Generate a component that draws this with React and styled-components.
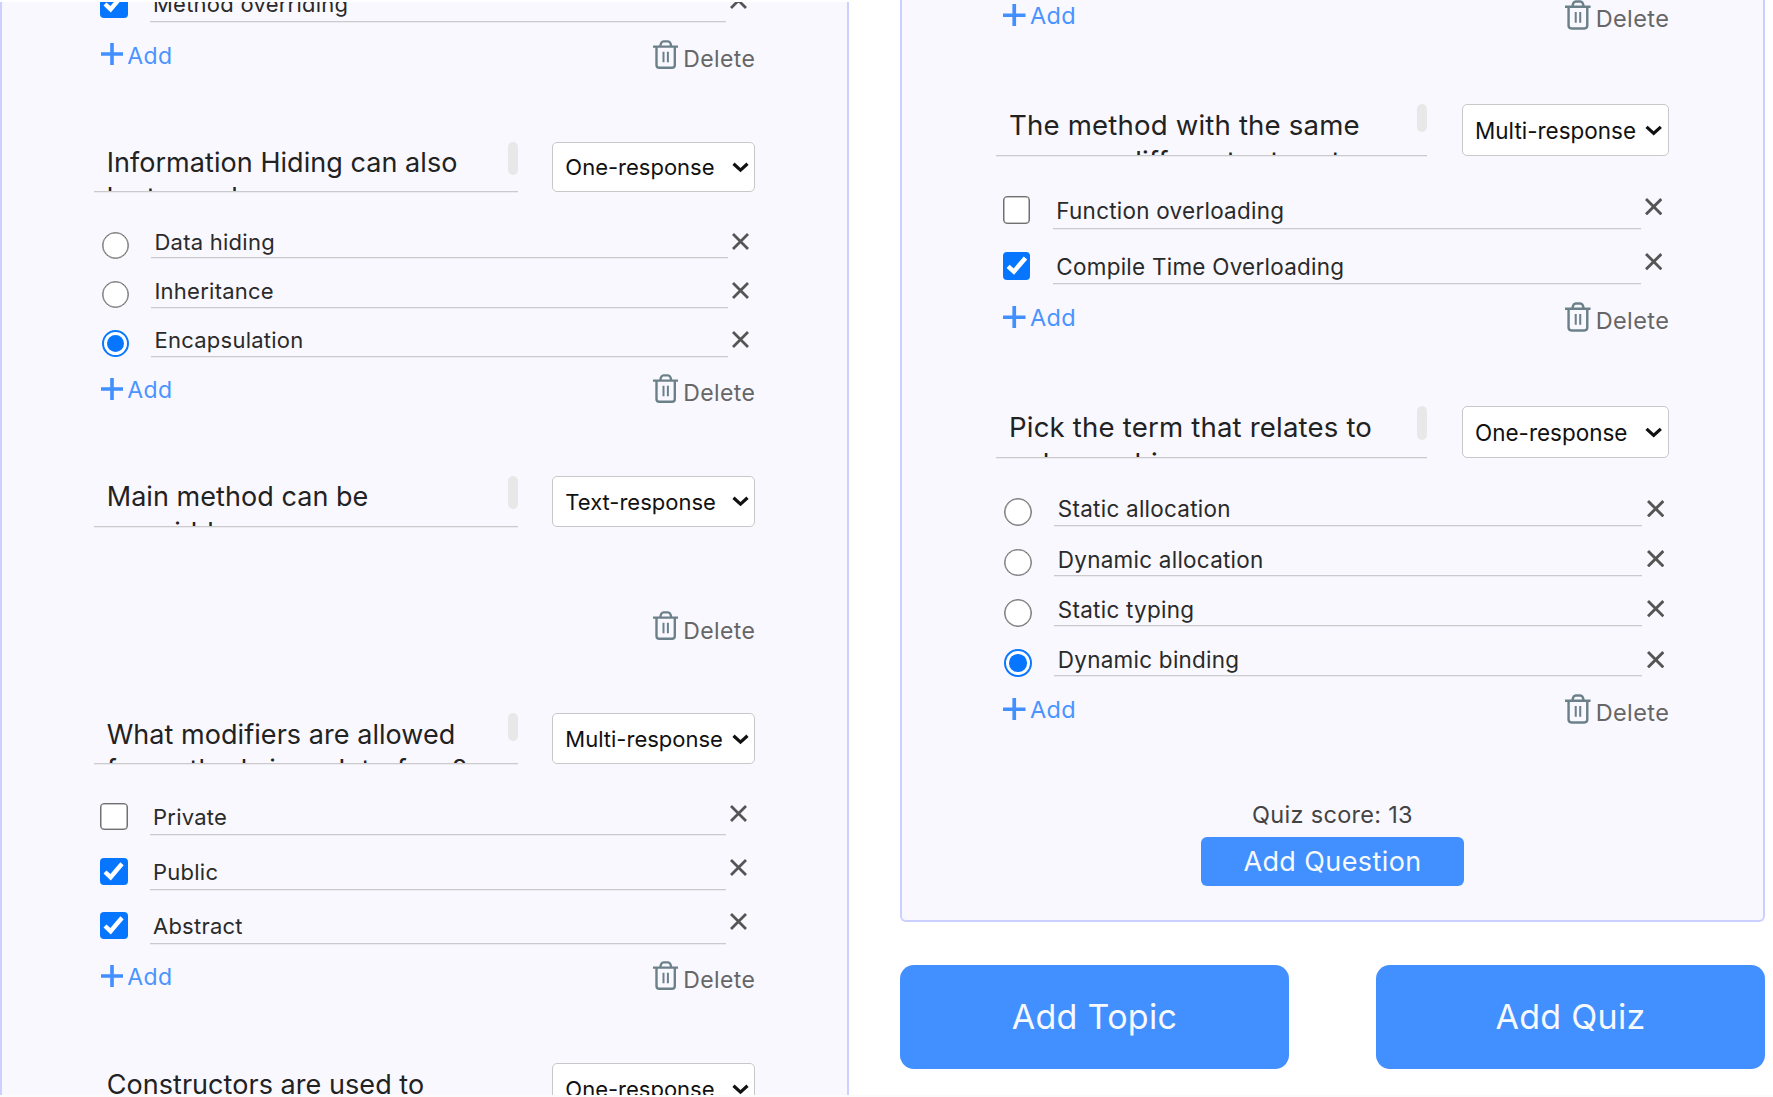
import React from "react";
import styled, { createGlobalStyle, css, ThemeProvider } from "styled-components";

const GlobalStyle = createGlobalStyle`
  *, *::before, *::after { box-sizing: border-box; }
  html, body { margin: 0; padding: 0; background: #fff; overflow: hidden; }
  body { font-family: Inter, "Liberation Sans", sans-serif; }
`;

/* Both columns share one set of measures; the theme scales them. */
const u = (n) => (p) => `${(n * p.theme.scale).toFixed(3)}px`;

const Page = styled.main`
  display: flex;
  gap: 51px;
  width: 1773px;
  height: 1097px;
  border-bottom: 2px solid #fbfbfb;
  background: #fff;
`;

const LeftColumn = styled.section`
  width: 849px;
  height: 1095px;
  padding-top: 2px;
  overflow: hidden;
`;

const RightColumn = styled.section`
  width: 865px;
  height: 1095px;
  overflow: hidden;
`;

const Panel = styled.div`
  display: flex;
  flex-direction: column;
  height: ${(p) => p.$height}px;
  padding: 0 ${u(91.7)};
  border: 2px solid #ccd0ff;
  border-width: ${(p) => (p.$closed ? "0 2px 2px" : "0 2px")};
  border-radius: ${(p) => (p.$closed ? "0 0 6px 6px" : "0")};
  background: #f9f8ff;
  overflow: hidden;
`;

const Scrolled = styled.div`
  display: flex;
  flex-direction: column;
  flex: none;
  margin-top: -${(p) => p.$by}px;
`;

const Question = styled.article`
  display: flex;
  flex-direction: column;
  flex: none;
  margin-bottom: ${u(69.3)};
`;

const Header = styled.header`
  display: flex;
  justify-content: space-between;
  height: ${u(50.5)};
  margin-bottom: ${u(17)};
`;

const underline = css`
  border-bottom: 1px solid #cbcbce;
  box-shadow: 0 1px 0 #ebebf0;
`;

const Prompt = styled.div`
  display: flex;
  justify-content: space-between;
  width: 64.1%;
  height: 100%;
  padding-left: ${u(13)};
  ${underline}
  overflow: hidden;
`;

const PromptText = styled.p`
  margin: ${u(3.4)} 0 0;
  font-size: ${u(27)};
  line-height: ${u(35.2)};
  letter-spacing: ${(p) => p.theme.tracking}px;
  color: #222;
  white-space: pre;
`;

const Thumb = styled.span`
  flex: none;
  width: ${u(10)};
  height: ${(p) => u(p.$size)(p)};
  border-radius: ${u(5)};
  background: #e8e8e8;
`;

const Select = styled.button`
  display: flex;
  align-items: center;
  justify-content: space-between;
  width: ${u(203)};
  height: 100%;
  padding: ${u(1.2)} ${u(5.5)} 0 ${u(12)};
  border: 1px solid #c8c8c8;
  border-radius: ${u(5)};
  background: #fff;
  color: #111;
  font: 400 ${u(22)} Inter, sans-serif;
  white-space: nowrap;
`;

const Options = styled.ul`
  display: flex;
  flex-direction: column;
  margin: 0;
  padding: 0;
  min-height: ${u(50.6)};
  list-style: none;
`;

const Option = styled.li`
  display: flex;
  height: ${(p) => u(p.$round ? 49.2 : 54.35)(p)};
  padding-left: ${(p) => u(p.$round ? 8.2 : 6.7)(p)};
`;

const Mark = styled.span`
  display: flex;
  align-items: center;
  justify-content: center;
  flex: none;
  width: ${u(27.2)};
  height: ${u(27.2)};
  margin-top: ${u(22.4)};
  border: 1px solid #707070;
  box-shadow: inset 0 0 0 0.6px #8a8a8a;
  border-radius: ${(p) => (p.$round ? "50%" : "4px")};
  background: #fff;
  ${(p) => p.$on && p.$round && css`
    border-color: #0a78ff;
    border-width: 2px;
    box-shadow: none;
    &::after {
      content: "";
      width: ${u(17)};
      height: ${u(17)};
      border-radius: 50%;
      background: #0675ff;
    }
  `}
  ${(p) => p.$on && !p.$round && css`
    border: 0;
    box-shadow: none;
    background: #0675ff;
  `}
`;

const Answer = styled.span`
  display: flex;
  flex: 1;
  align-items: flex-end;
  height: 100%;
  margin-left: ${u(22)};
  padding: 0 0 ${(p) => u(p.$round ? 1.6 : 3)(p)} ${u(3.4)};
  ${underline}
  font-size: ${u(22)};
  line-height: ${u(27)};
  letter-spacing: 0.25px;
  color: #2a2a2a;
`;

const Remove = styled.span`
  display: flex;
  width: ${(p) => u((p.$round ? 27.6 : 29.3) - p.theme.edge)(p)};
  padding: ${u(23.8)} 0 0 ${u(4.2)};
`;

const Footer = styled.footer`
  display: flex;
  height: ${u(50)};
`;

const AddLink = styled.a`
  display: flex;
  align-items: flex-start;
  padding: ${u(20.8)} 0 0 ${u(7.2)};
  font-size: ${u(23)};
  line-height: ${u(28)};
  letter-spacing: 0.4px;
  color: #4a94ff;
  span { margin: ${u(-1.5)} 0 0 ${u(4.3)}; }
`;

const DeleteLink = styled(AddLink)`
  margin-left: auto;
  padding: ${u(17.4)} 0 0;
  color: #666;
  span { margin: ${u(5.1)} 0 0 ${u(4.8)}; }
`;

const Summary = styled.div`
  display: flex;
  flex-direction: column;
  align-items: center;
  margin-top: 2.4px;
`;

const Score = styled.p`
  margin: 0 0 8.4px;
  font-size: 23.5px;
  line-height: 28px;
  letter-spacing: 0.3px;
  color: #444;
`;

const AddQuestion = styled.button`
  width: 263px;
  height: 49px;
  padding: 0;
  border: 0;
  border-radius: 6px;
  background: #428fff;
  color: #f6faff;
  font: 400 27px Inter, sans-serif;
  letter-spacing: 0.4px;
`;

const Actions = styled.div`
  display: flex;
  justify-content: space-between;
  margin-top: 43px;
`;

const BigButton = styled.button`
  width: 389px;
  height: 104px;
  padding: 0 0 2px;
  border: 0;
  border-radius: 14px;
  background: #428fff;
  color: #f6faff;
  font: 400 34px Inter, sans-serif;
  letter-spacing: 0.3px;
`;

const Icon = styled.svg`
  display: block;
  flex: none;
  width: ${(p) => u(p.$w)(p)};
  height: ${(p) => u(p.$h)(p)};
  fill: none;
  stroke: ${(p) => p.$color};
  stroke-width: ${(p) => p.$stroke};
`;

const Cross = () => (
  <Icon $w={17} $h={17} $color="#555" $stroke={2.8} viewBox="0 0 17 17">
    <path d="M1 1L16 16M16 1L1 16" />
  </Icon>
);
const Plus = () => (
  <Icon $w={22} $h={22} $color="#428fff" $stroke={3.6} viewBox="0 0 22 22">
    <path d="M11 0V22M0 11H22" />
  </Icon>
);
const Tick = () => (
  <Icon $w={27} $h={27} $color="#fff" $stroke={4.4} viewBox="0 0 27 27">
    <path d="M5 14L10.6 19.2L22 5.8" />
  </Icon>
);
const Chevron = () => (
  <Icon $w={17} $h={11} $color="#111" $stroke={3.2} viewBox="0 0 17 11">
    <path d="M1.5 1.8L8.5 8.2L15.5 1.8" />
  </Icon>
);
const Trash = () => (
  <Icon $w={25} $h={29} $color="#6c808a" $stroke={2.4} viewBox="0 0 25 29">
    <path d="M0 6.6H25M3.5 6.6V25Q3.5 27.8 6.3 27.8H19Q21.800 27.8 21.8 25V6.6M7.2 6.6Q8 1.4 10.5 1.4H15Q17.500 1.4 18.3 6.6" />
    <path d="M10.500 11.800V22.300M14.900 11.800V22.300" strokeWidth="2" />
  </Icon>
);

function OptionRow({ text, on, round }) {
  return (
    <Option $round={round}>
      <Mark $round={round} $on={on}>{on && !round && <Tick />}</Mark>
      <Answer $round={round}>{text}</Answer>
      <Remove $round={round}><Cross /></Remove>
    </Option>
  );
}

function QuestionFooter({ add = true }) {
  return (
    <Footer>
      {add && <AddLink><Plus /><span>Add</span></AddLink>}
      <DeleteLink><Trash /><span>Delete</span></DeleteLink>
    </Footer>
  );
}

function QuestionBlock({ prompt, kind, thumb, options = [] }) {
  return (
    <Question>
      {prompt && (
        <Header>
          <Prompt>
            <PromptText>{prompt}</PromptText>
            <Thumb $size={thumb} />
          </Prompt>
          <Select>{kind}<Chevron /></Select>
        </Header>
      )}
      {(prompt || options.length > 0) && (
        <Options>
          {options.map(([text, on]) => (
            <OptionRow key={text} text={text} on={on} round={kind === "One-response"} />
          ))}
        </Options>
      )}
      <QuestionFooter add={kind !== "Text-response"} />
    </Question>
  );
}

const leftQuestions = [
  { kind: "Multi-response", options: [["Method overriding", true]] },
  {
    prompt: "Information Hiding can also\nbe termed as",
    kind: "One-response",
    thumb: 33,
    options: [["Data hiding"], ["Inheritance"], ["Encapsulation", true]],
  },
  { prompt: "Main method can be\noverridden", kind: "Text-response", thumb: 33 },
  {
    prompt: "What modifiers are allowed\nfor methods in an Interface?",
    kind: "Multi-response",
    thumb: 27.5,
    options: [["Private"], ["Public", true], ["Abstract", true]],
  },
  { prompt: "Constructors are used to", kind: "One-response", thumb: 0 },
];

const rightQuestions = [
  { kind: "Multi-response" },
  {
    prompt: "The method with the same\nname or different return type",
    kind: "Multi-response",
    thumb: 27.5,
    options: [["Function overloading"], ["Compile Time Overloading", true]],
  },
  {
    prompt: "Pick the term that relates to\npolymorphism",
    kind: "One-response",
    thumb: 33,
    options: [["Static allocation"], ["Dynamic allocation"], ["Static typing"], ["Dynamic binding", true]],
  },
];

export default function App() {
  return (
    <Page>
      <GlobalStyle />
      <ThemeProvider theme={{ scale: 1, tracking: 0.05, edge: 0 }}>
        <LeftColumn>
          <Panel $height={1093}>
            <Scrolled $by={34}>
              {leftQuestions.map((q, i) => <QuestionBlock key={i} {...q} />)}
            </Scrolled>
          </Panel>
        </LeftColumn>
      </ThemeProvider>
      <ThemeProvider theme={{ scale: 1.0222, tracking: 0.18, edge: 1.3 }}>
        <RightColumn>
          <Panel $height={922} $closed>
            <Scrolled $by={17.6}>
              {rightQuestions.map((q, i) => <QuestionBlock key={i} {...q} />)}
              <Summary>
                <Score>Quiz score: 13</Score>
                <AddQuestion>Add Question</AddQuestion>
              </Summary>
            </Scrolled>
          </Panel>
          <Actions>
            <BigButton>Add Topic</BigButton>
            <BigButton>Add Quiz</BigButton>
          </Actions>
        </RightColumn>
      </ThemeProvider>
    </Page>
  );
}
